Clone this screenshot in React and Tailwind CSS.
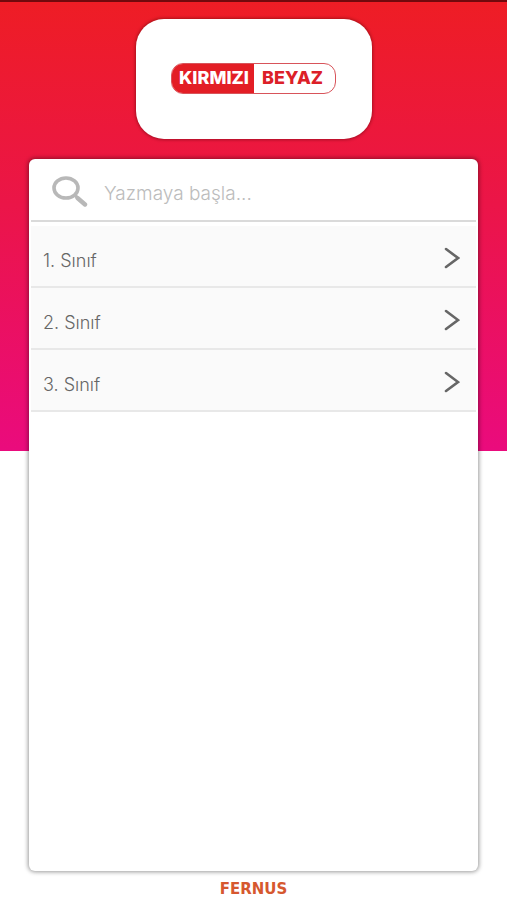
import React from "react";

const classes = ["1. Sınıf", "2. Sınıf", "3. Sınıf"];

function Brand() {
  return (
    <header className="mx-auto flex h-[120px] w-[236px] items-center justify-center rounded-[28px] bg-white pb-0.5 shadow-[0_0_3px_1px_rgba(70,0,0,0.4)]">
      <div className="flex h-[31px] w-[165px] overflow-hidden rounded-xl border border-[#d8545a] text-lg font-extrabold leading-none">
        <span className="flex w-[82px] items-center justify-center bg-[#e31e25] pl-0.5 text-white">KIRMIZI</span>
        <span className="flex flex-1 items-center justify-center pr-1 text-[#dc2028]">BEYAZ</span>
      </div>
    </header>
  );
}

function SearchIcon() {
  return (
    <svg className="h-8 w-9 shrink-0" viewBox="0 0 36 32" fill="none" stroke="#b8b8b8" aria-hidden="true">
      <ellipse cx="14" cy="12" rx="12" ry="10" strokeWidth="3.6" />
      <path d="M22.5 19 25.5 21.5" strokeWidth="3" />
      <path d="m25.5 22 7.5 6.5" strokeWidth="4.4" strokeLinecap="round" />
    </svg>
  );
}

function Chevron() {
  return (
    <svg className="h-[22px] w-4 shrink-0" viewBox="0 0 16 22" fill="none" stroke="#666" strokeWidth="2.6" strokeLinecap="round" aria-hidden="true">
      <path d="M2 2 14 11 2 20" />
    </svg>
  );
}

export default function App() {
  return (
    <div className="flex min-h-screen flex-col border-t-2 border-[#72090d] bg-white bg-[linear-gradient(#ee1d25,#eb1548_45%,#ea0b7d)] bg-[length:100%_50%] bg-no-repeat px-[29px] pt-[17px] font-['Inter','Noto_Sans',sans-serif]">
      <Brand />
      <main className="mt-5 flex-1 rounded-md bg-white px-0.5 shadow-[0_0_4px_1px_rgba(0,0,0,0.4)]">
        <label className="flex h-[63px] items-center gap-4 border-b-2 border-[#dadada] pl-[21px] pt-1">
          <SearchIcon />
          <input
            type="text"
            aria-label="Ara"
            placeholder="Yazmaya başla..."
            className="min-w-0 flex-1 bg-transparent pt-1.5 text-[19px] font-light text-[#666] outline-none placeholder:text-[#bcbcbc]"
          />
        </label>
        <ul className="mt-1">
          {classes.map((name) => (
            <li key={name}>
              <button type="button" className="flex h-[62px] w-full items-center justify-between border-b-2 border-[#e8e8e8] bg-[#fafafa] pl-3 pr-4 pt-1 text-left text-[#666]">
                <span className="pt-1.5 text-lg font-light">{name}</span>
                <Chevron />
              </button>
            </li>
          ))}
        </ul>
      </main>
      <footer className="flex h-[29px] items-center justify-center pt-2 font-['DejaVu_Sans',sans-serif] text-[15px] font-bold leading-none text-[#d6582f]">
        FERNUS
      </footer>
    </div>
  );
}
